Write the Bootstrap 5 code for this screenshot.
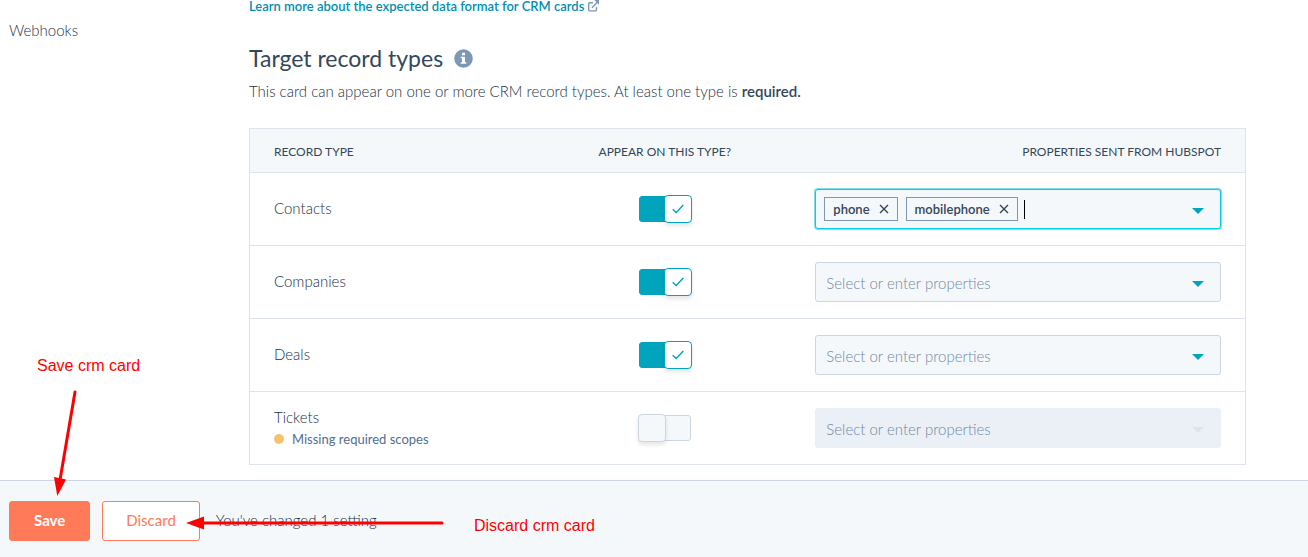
<!DOCTYPE html>
<html lang="en">
<head>
<meta charset="utf-8">
<meta name="viewport" content="width=device-width, initial-scale=1">
<title>CRM card settings</title>
<link href="https://cdn.jsdelivr.net/npm/bootstrap@5.3.0/dist/css/bootstrap.min.css" rel="stylesheet">
<style>
  body { font-family: Lato, "Liberation Sans", sans-serif; font-size: 15px; font-weight: 300; line-height: 24px; color: #1c3046; }
  .side-nav { width: 240px; padding: 18px 9px; }
  .side-nav a { color: #1c3046; }
  .main-col { padding: 0 62px 15px 9px; }
  .doc-link { font-size: 13px; line-height: 12px; font-weight: 600; color: #0091ae; }
  h1 { font-size: 23px; line-height: 30px; font-weight: 400; margin: 31px 0 0; color: #33475b; }
  .intro { margin: 6px 0 25px; }
  .intro strong { font-weight: 600; color: #33475b; }
  .record-table { --bs-table-color: #1c3046; border: 1px solid #dfe3eb; table-layout: fixed; color: #1c3046; }
  .record-table > :not(caption) > * > * { padding: 0 24px; border-bottom: 1px solid #dfe3eb; box-shadow: none; background: transparent; }
  .record-table thead th { height: 44px; padding-top: 2px; background: #f5f8fa; font-size: 12px; font-weight: 400; line-height: 20px; vertical-align: middle; color: #33475b; }
  .record-table tbody > tr > * { height: 73px; font-weight: 300; }
  .record-table tbody > tr > th { padding-bottom: 3px; }
  .col-type { width: 29%; }
  .col-appear { width: 25.4%; }
  .scope-note { font-size: 13px; line-height: 20px; font-weight: 400; color: #516f90; }
  .scope-dot { width: 10px; height: 10px; background: #f5c26b; margin-right: 8px; }

  .toggle { appearance: none; display: block; position: relative; width: 52px; height: 26px; margin: 0 auto; border: 1px solid #cbd6e2; border-radius: 3px; background: #f5f8fa; }
  .toggle::after { content: ""; position: absolute; top: -2px; left: -2px; width: 28px; height: 28px; border: 1px solid #cbd6e2; border-radius: 4px; background: #f5f8fa; box-shadow: 0 3px 4px rgba(0,0,0,.1); }
  .toggle:checked { background: #00a4bd; border-color: #00a4bd; }
  .toggle:checked::after { left: auto; right: -2px; border-color: #00a4bd; background: #fff url("data:image/svg+xml,%3Csvg xmlns='http://www.w3.org/2000/svg' width='12' height='10'%3E%3Cpath d='M.7 5.2 4.2 8.6 11.3 1' fill='none' stroke='%2300a4bd' stroke-width='1.4'/%3E%3C/svg%3E") center / 12px 10px no-repeat; }

  .prop-box { height: 40px; border: 1px solid #cbd6e2; border-radius: 3px; color: #99acc2; font-size: 15px; font-weight: 400; padding: 2px 40px 0 10px; background: #f5f8fa url("data:image/svg+xml,%3Csvg xmlns='http://www.w3.org/2000/svg' width='12' height='6'%3E%3Cpath d='M0 0h12L6 6z' fill='%2300a4bd'/%3E%3C/svg%3E") right 16px top 18px / 12px 6px no-repeat; }
  select.prop-box { font-weight: 300; color: #7089a6; }
  .prop-box:disabled { color: #7089a6; border-color: #eaf0f6; background-color: #eaf0f6; background-image: url("data:image/svg+xml,%3Csvg xmlns='http://www.w3.org/2000/svg' width='12' height='6'%3E%3Cpath d='M0 0h12L6 6z' fill='%23dfe3eb'/%3E%3C/svg%3E"); }
  .prop-box.is-active { border-color: #00d0e4; box-shadow: 0 0 0 1px #7fe0ec; padding: 0 40px 0 8px; }
  .tag { height: 24px; border: 1px solid #7c98b6; padding: 0 8px; font-size: 13px; font-weight: 600; line-height: 20px; color: #33475b; margin-right: 8px; }
  .tag button { border: 0; padding: 0; background: none; line-height: 0; color: #33475b; margin-left: 9px; }
  .tag-input { width: 60px; height: 19px; border: 0; border-left: 1px solid #000; padding: 0; margin-left: -2px; background: transparent; outline: 0; }

  .save-bar { height: 77px; padding: 4px 9px 0; background: #f5f8fa; border-top: 1px solid #cbd6e2; }
  .save-bar .btn { height: 40px; padding: 0 24px 2px; border-radius: 3px; font-size: 15px; line-height: 20px; --bs-btn-border-color: #ff7a59; }
  .save-bar .btn-save { --bs-btn-color: #fff; --bs-btn-bg: #ff7a59; font-weight: 700; margin-right: 12px; }
  .save-bar .btn-discard { --bs-btn-color: #ff7a59; --bs-btn-bg: #fff; padding: 0 23px 2px; margin-right: 16px; }
  .save-bar span { padding-bottom: 3px; }
  .notes { left: 0; bottom: 0; pointer-events: none; font-family: "Liberation Sans", Arial, sans-serif; font-size: 16px; font-weight: 400; }
</style>
</head>
<body>
<div class="position-relative d-flex flex-column min-vh-100">
  <div class="d-flex flex-grow-1">
    <nav class="side-nav flex-shrink-0"><a href="#" class="text-decoration-none">Webhooks</a></nav>
    <main class="main-col flex-grow-1">
      <a href="#" class="doc-link text-decoration-none d-flex align-items-center">Learn more about the expected data format for CRM cards
        <svg class="ms-1" width="11" height="12" viewBox="0 0 11 12" fill="none" stroke="#7c98b6" stroke-width="1.4"><path d="M5 2.7H1.9Q.7 2.7.7 3.9v5.8q0 1.2 1.2 1.2h5.4q1.2 0 1.2-1.2V7M4 7.7 9.5 2"/><path d="M6.3 0H11v4.8z" fill="#7c98b6" stroke="none"/></svg>
      </a>
      <h1 class="d-flex align-items-center">Target record types
        <svg class="ms-2" width="23" height="20" viewBox="0 0 23 20"><circle cx="12.500" cy="10.500" r="9.300" fill="#7c98b6"/><path d="M11 4.700h3v2.500h-3zM9.700 8.700H14v5.500h1.300v1.600H9.700v-1.600H11v-3.900H9.700z" fill="#fff"/></svg>
      </h1>
      <p class="intro">This card can appear on one or more CRM record types. At least one type is <strong>required.</strong></p>
      <table class="table record-table align-middle mb-0">
        <thead>
          <tr><th class="col-type" scope="col">RECORD TYPE</th><th class="col-appear text-center" scope="col">APPEAR ON THIS TYPE?</th><th class="text-end" scope="col">PROPERTIES SENT FROM HUBSPOT</th></tr>
        </thead>
        <tbody>
          <tr>
            <th scope="row"><label for="t1">Contacts</label></th>
            <td><input class="toggle" type="checkbox" id="t1" checked></td>
            <td>
              <div class="prop-box is-active d-flex align-items-center">
                <span class="tag d-flex align-items-center">phone<button type="button" aria-label="Remove phone"><svg width="10" height="10" viewBox="0 0 10 10" stroke="currentColor" stroke-width="1.400"><path d="m1 1 8 8M9 1 1 9"/></svg></button></span>
                <span class="tag d-flex align-items-center">mobilephone<button type="button" aria-label="Remove mobilephone"><svg width="10" height="10" viewBox="0 0 10 10" stroke="currentColor" stroke-width="1.400"><path d="m1 1 8 8M9 1 1 9"/></svg></button></span>
                <input class="tag-input" type="text" aria-label="Contact properties">
              </div>
            </td>
          </tr>
          <tr>
            <th scope="row"><label for="t2">Companies</label></th>
            <td><input class="toggle" type="checkbox" id="t2" checked></td>
            <td><select class="form-select prop-box" aria-label="Company properties"><option>Select or enter properties</option></select></td>
          </tr>
          <tr>
            <th scope="row"><label for="t3">Deals</label></th>
            <td><input class="toggle" type="checkbox" id="t3" checked></td>
            <td><select class="form-select prop-box" aria-label="Deal properties"><option>Select or enter properties</option></select></td>
          </tr>
          <tr>
            <th scope="row"><label for="t4">Tickets</label><div class="scope-note d-flex align-items-center"><span class="scope-dot rounded-circle"></span>Missing required scopes</div></th>
            <td><input class="toggle" type="checkbox" id="t4"></td>
            <td><select class="form-select prop-box" aria-label="Ticket properties" disabled><option>Select or enter properties</option></select></td>
          </tr>
        </tbody>
      </table>
    </main>
  </div>
  <footer class="save-bar d-flex align-items-center">
    <button type="button" class="btn btn-save">Save</button>
    <button type="button" class="btn btn-discard">Discard</button>
    <span>You've changed 1 setting</span>
  </footer>
  <svg class="notes position-absolute" width="620" height="210" viewBox="0 0 620 210" fill="#f00">
    <text x="37" y="24">Save crm card</text>
    <text x="474" y="184">Discard crm card</text>
    <path d="M75 45 60 133M203 176H442" stroke="#f00" stroke-width="3" stroke-linecap="round"/>
    <path d="M54 130 66 132.500 57.300 149zM186 176 204 169.500V182.500z"/>
  </svg>
</div>
<script src="https://cdn.jsdelivr.net/npm/bootstrap@5.3.0/dist/js/bootstrap.bundle.min.js"></script>
</body>
</html>
